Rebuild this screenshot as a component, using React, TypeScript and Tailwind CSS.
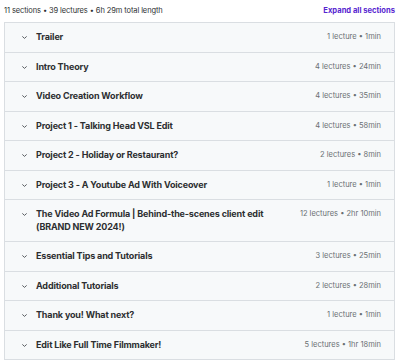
import React from "react";

const sections: { title: string; meta: string }[] = [
  { title: "Trailer", meta: "1 lecture • 1min" },
  { title: "Intro Theory", meta: "4 lectures • 24min" },
  { title: "Video Creation Workflow", meta: "4 lectures • 35min" },
  { title: "Project 1 - Talking Head VSL Edit", meta: "4 lectures • 58min" },
  { title: "Project 2 - Holiday or Restaurant?", meta: "2 lectures • 8min" },
  { title: "Project 3 - A Youtube Ad With Voiceover", meta: "1 lecture • 1min" },
  {
    title: "The Video Ad Formula | Behind-the-scenes client edit (BRAND NEW 2024!)",
    meta: "12 lectures • 2hr 10min",
  },
  { title: "Essential Tips and Tutorials", meta: "3 lectures • 25min" },
  { title: "Additional Tutorials", meta: "2 lectures • 28min" },
  { title: "Thank you! What next?", meta: "1 lecture • 1min" },
  { title: "Edit Like Full Time Filmmaker!", meta: "5 lectures • 1hr 18min" },
];

function Chevron() {
  return (
    <svg width="7" height="5" viewBox="0 0 7 5" className="shrink-0 mt-[4px]">
      <path d="M1.3 1.4 L3.5 3.4 L5.7 1.4" fill="none" stroke="#4a4e52" strokeWidth="0.9" />
    </svg>
  );
}

export default function App() {
  return (
    <div
      className="w-[400px] h-[362px] bg-white overflow-hidden"
      style={{ fontFamily: "Inter, 'Liberation Sans', sans-serif" }}
    >
      <div className="flex items-center justify-between pl-[4px] pr-[5px] h-[22px]">
        <span className="text-[7.5px] text-[#2d2f31] tracking-[-0.1px]">
          11 sections • 39 lectures • 6h 29m total length
        </span>
        <span className="text-[7.6px] font-bold text-[#5624d0]">Expand all sections</span>
      </div>
      <div className="mx-[4px] w-[391px] border border-[#dadee2] border-b-0">
        {sections.map((s, i) => (
          <div
            key={i}
            className="flex items-start bg-[#f7f9fa] border-b border-[#dadee2] min-h-[28.6px] pl-[16px] pr-[13px] py-[8px]"
          >
            <Chevron />
            <div className="ml-[8px] flex-1 text-[9px] leading-[12.5px] font-bold text-[#2d2f31] tracking-[-0.15px] pr-[24px]">
              {s.title}
            </div>
            <div className="text-[7.5px] leading-[12.5px] text-[#6a6f73] whitespace-nowrap">{s.meta}</div>
          </div>
        ))}
      </div>
    </div>
  );
}
